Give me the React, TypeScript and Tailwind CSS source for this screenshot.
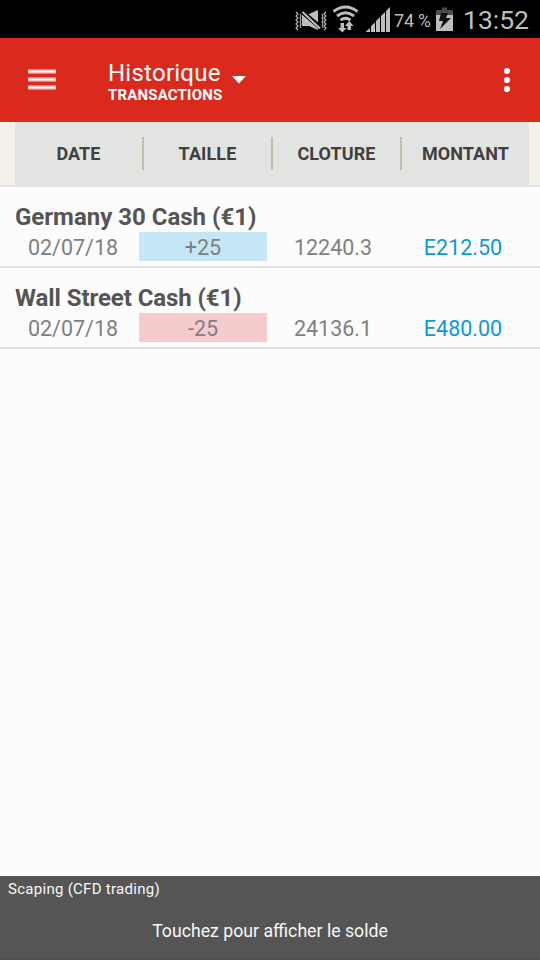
import React from "react";

const columns = ["DATE", "TAILLE", "CLOTURE", "MONTANT"];

const rows = [
  { name: "Germany 30 Cash (€1)", tracking: "tracking-normal", date: "02/07/18", size: "+25", tint: "bg-[#c5e7f5]", close: "12240.3", amount: "E212.50" },
  { name: "Wall Street Cash (€1)", tracking: "tracking-[-0.08px]", date: "02/07/18", size: "-25", tint: "bg-[#f6cbcc]", close: "24136.1", amount: "E480.00" },
];

function StatusIcons() {
  return (
    <svg className="h-[38px] w-[98px] shrink-0" viewBox="293 0 98 38" fill="none" stroke="#bebebe">
      <path d="M296 12l2 2-2 2 2 2-2 2 2 2-2 2 2 2-2 2 2 2M300 14l1 2-1 2 1 2-1 2 1 2-1 2 1 2M326 12l-2 2 2 2-2 2 2 2-2 2 2 2-2 2 2 2-2 2M322 14l1 2-1 2 1 2-1 2 1 2-1 2 1 2" strokeWidth="1.1" />
      <path d="M302 14h7l9-4v20l-9-4h-7z" fill="#bebebe" stroke="none" />
      <path d="M300 10l21 18" strokeWidth="4.500" stroke="#000" />
      <path d="M302.500 12l17.500 16.500" strokeWidth="2" />
      <path d="M333.500 11.500q12-9 24 0M337 16q8.500-6.500 17 0M340.500 20.200q5-4 10 0" strokeWidth="2.900" />
      <path d="M340.500 23h3.500v5h2.500l-4.200 4.500-4.300-4.500h2.500zM347.500 30h3.500v-4h2.500l-4.200-5-4.300 5h2.500z" fill="#bebebe" stroke="none" />
      <path d="M365.500 32l4.500-4v4zM371 26l4-3.500v9.500h-4zM376 21l4-4v15h-4zM381 16l4-4v20h-4zM386 11l4-4v25h-4z" fill="#bebebe" stroke="none" />
    </svg>
  );
}

function Battery() {
  return (
    <svg className="ml-[5px] h-[38px] w-[17px] shrink-0" viewBox="436 0 17 38">
      <path d="M442 7.500h5v2.500h6v6h-17v-6h6z" fill="#4c4c4c" />
      <path d="M436 15h17v16h-17z" fill="#bebebe" />
      <path d="M441 13h7l-2 5h5l-11 11 3-8h-4z" fill="#111" />
    </svg>
  );
}

export default function App() {
  return (
    <div className="flex h-[960px] w-[540px] flex-col overflow-hidden bg-[#fcfcfc] font-['Roboto',sans-serif] whitespace-nowrap">
      <div className="flex h-[38px] shrink-0 items-center bg-black pl-[293px] text-[#bebebe]">
        <StatusIcons />
        <span className="ml-[3px] mt-[3px] w-[20px] text-[18px] leading-5">74</span>
        <span className="ml-[4px] mt-[4px] w-[13px] text-[17.500px] leading-5">%</span>
        <Battery />
        <span className="ml-[10px] mt-[1px] text-[26.500px] leading-8">13:52</span>
      </div>

      <header className="flex h-[84px] shrink-0 items-center bg-[#db291e] text-white">
        <svg className="ml-[28px] h-[22px] w-[28px]" viewBox="0 0 28 22" fill="white">
          <path d="M0 0h28v5H0zM0 8h28v5H0zM0 16h28v5H0z" fillOpacity=".4" />
          <path d="M0 1h28v3H0zM0 9h28v3H0zM0 17h28v3H0z" fillOpacity=".6" />
          <path d="M0 2h28v1H0zM0 10h28v1H0zM0 18h28v1H0z" />
        </svg>
        <div className="mt-[4px] ml-[52px]">
          <div className="flex h-[27px] items-center">
            <span className="w-[113px] text-[24px] leading-[27px] tracking-[0.25px]">Historique</span>
            <svg className="ml-[11px] mt-[13px] h-[8px] w-[14px]" viewBox="0 0 14 8" fill="white">
              <path d="M0 0h14L7 7.500z" />
            </svg>
          </div>
          <div className="h-[17px] text-[15px] leading-[17px] font-bold tracking-[0.18px]">TRANSACTIONS</div>
        </div>
        <svg className="mr-[29px] ml-auto h-[26px] w-[8px]" viewBox="0 0 8 26" fill="white">
          <circle cx="4" cy="4" r="3.100" />
          <circle cx="4" cy="13" r="3.100" />
          <circle cx="4" cy="22" r="3.100" />
        </svg>
      </header>

      <div className="h-[65px] shrink-0 border-b-2 border-[#e2e4e0] bg-[#f4f1ea] pr-[11px] pl-[15px]">
        <div className="flex h-[63px] items-center bg-[#e2e4e1] text-[18px] font-bold text-[#404040]">
          {columns.map((c, i) => (
            <React.Fragment key={c}>
              {i > 0 && <div className="h-[33px] w-[2px] shrink-0 bg-[#c0bfad]" />}
              <div className="w-[127px] shrink-0 text-center leading-[63px] tracking-[0.1px]">{c}</div>
            </React.Fragment>
          ))}
        </div>
      </div>

      {rows.map((r) => (
        <div key={r.name} className="h-[81px] shrink-0 border-b-2 border-[#e0e0e0] pt-[15px]">
          <div className={"h-[30px] pl-[15px] text-[24px] leading-[30px] font-bold text-[#555] " + r.tracking}>{r.name}</div>
          <div className="flex h-[29px] pl-[10px] text-center text-[21.500px] leading-[32px] text-[#808080]">
            <div className="w-[126px]">{r.date}</div>
            <div className={"ml-[3px] w-[128px] " + r.tint}>{r.size}</div>
            <div className="ml-[2px] w-[128px]">{r.close}</div>
            <div className="ml-[2px] w-[128px] text-[#0c99d9]">{r.amount}</div>
          </div>
        </div>
      ))}

      <footer className="mt-auto h-[84px] shrink-0 border-b-2 border-[#504e50] bg-[#555] text-[#f8f8f8]">
        <div className="h-[26px] pl-[8px] text-[15px] leading-[26px] tracking-[0.28px]">Scaping (CFD trading)</div>
        <div className="text-center text-[17.700px] leading-[58px]">Touchez pour afficher le solde</div>
      </footer>
    </div>
  );
}
